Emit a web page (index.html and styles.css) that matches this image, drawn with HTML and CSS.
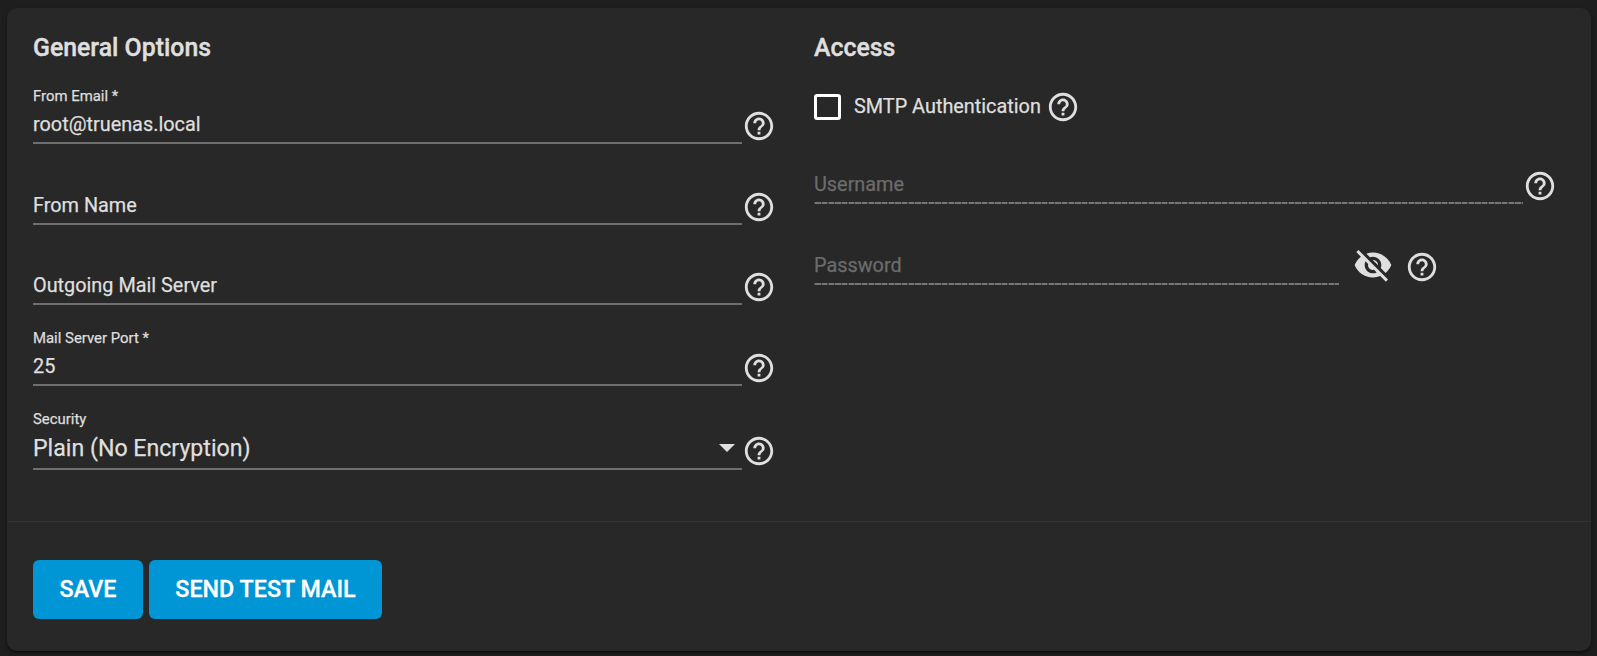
FILE: index.html
```html
<!DOCTYPE html>
<html lang="en">
<head>
<meta charset="utf-8">
<title>Email</title>
<link rel="stylesheet" href="styles.css">
</head>
<body>
<svg class="sprite" aria-hidden="true">
  <symbol id="help" viewBox="0 0 24 24"><path d="M11 18h2v-2h-2v2zm1-16C6.48 2 2 6.48 2 12s4.48 10 10 10 10-4.480 10-10S17.520 2 12 2zm0 18c-4.410 0-8-3.590-8-8s3.590-8 8-8 8 3.590 8 8-3.590 8-8 8zm0-14c-2.210 0-4 1.790-4 4h2c0-1.100.9-2 2-2s2 .9 2 2c0 2-3 1.750-3 5h2c0-2.250 3-2.500 3-5 0-2.210-1.790-4-4-4z"/></symbol>
  <symbol id="eye-off" viewBox="0 0 24 24"><path d="M12 7c2.760 0 5 2.240 5 5 0 .65-.13 1.260-.36 1.830l2.920 2.920c1.510-1.260 2.700-2.890 3.430-4.750-1.730-4.390-6-7.500-11-7.500-1.400 0-2.740.25-3.980.7l2.160 2.160C10.740 7.130 11.350 7 12 7zM2 4.270l2.280 2.280.46.46C3.080 8.300 1.780 10.020 1 12c1.730 4.390 6 7.500 11 7.500 1.550 0 3.030-.3 4.380-.84l.42.42L19.730 22 21 20.730 3.270 3 2 4.270zM7.530 9.800l1.550 1.550c-.05.21-.08.43-.08.65 0 1.660 1.340 3 3 3 .22 0 .44-.03.65-.08l1.550 1.550c-.67.33-1.410.53-2.200.53-2.760 0-5-2.240-5-5 0-.79.2-1.530.53-2.200zm4.310-.78l3.150 3.150.02-.16c0-1.660-1.340-3-3-3l-.17.01z"/></symbol>
</svg>
<main class="card">
  <div class="columns">
    <section class="column">
      <h3 class="title">General Options</h3>
      <div class="row">
        <div class="field"><span class="label">From Email *</span><span class="value">root@truenas.local</span></div>
        <svg class="help"><use href="#help"/></svg>
      </div>
      <div class="row">
        <div class="field"><span class="value">From Name</span></div>
        <svg class="help"><use href="#help"/></svg>
      </div>
      <div class="row short">
        <div class="field"><span class="value">Outgoing Mail Server</span></div>
        <svg class="help"><use href="#help"/></svg>
      </div>
      <div class="row">
        <div class="field"><span class="label">Mail Server Port *</span><span class="value">25</span></div>
        <svg class="help"><use href="#help"/></svg>
      </div>
      <div class="row tall">
        <div class="field"><span class="label">Security</span><span class="value select">Plain (No Encryption)<i class="arrow"></i></span></div>
        <svg class="help"><use href="#help"/></svg>
      </div>
    </section>
    <section class="column">
      <h3 class="title">Access</h3>
      <div class="check-row">
        <span class="checkbox"></span><span class="check-label">SMTP Authentication</span>
        <svg class="help"><use href="#help"/></svg>
      </div>
      <div class="row">
        <div class="field disabled"><span class="value">Username</span></div>
        <svg class="help"><use href="#help"/></svg>
      </div>
      <div class="row">
        <div class="field disabled password"><span class="value">Password</span></div>
        <svg class="eye"><use href="#eye-off"/></svg>
        <svg class="help"><use href="#help"/></svg>
      </div>
    </section>
  </div>
  <footer class="actions">
    <button class="btn save">SAVE</button>
    <button class="btn test">SEND TEST MAIL</button>
  </footer>
</main>
</body>
</html>
```
FILE: styles.css
```css
* { box-sizing: border-box; }
body {
  margin: 0;
  height: 656px;
  padding: 8px 6px 5px 7px;
  background: #1e1e1e;
  color: #dfdfdf;
  font-family: Roboto, sans-serif;
  -webkit-text-stroke: .25px;
  overflow: hidden;
}
.sprite { position: absolute; width: 0; height: 0; }
.card {
  height: 643px;
  border-radius: 10px;
  background: #282828;
  box-shadow: 0 3px 2px -2px rgba(0,0,0,.3), 0 2px 2px rgba(0,0,0,.2), 0 2px 5px rgba(0,0,0,.2);
}
.columns {
  display: grid;
  grid-template-columns: 743px 743px;
  column-gap: 38px;
  height: 513px;
  padding: 0 26px;
}
.title {
  height: 55px;
  margin: 0;
  padding-top: 24px;
  font-size: 24.850px;
  font-weight: 500;
  line-height: 31px;
  -webkit-text-stroke: .4px;
}
.row { display: flex; align-items: flex-end; height: 81px; }
.row.short { height: 80px; }
.row.tall { height: 84px; }
.field {
  display: flex;
  flex: none;
  flex-direction: column;
  width: 709px;
  border-bottom: 2px solid #6f6f6f;
}
.label { font-size: 14.900px; line-height: 18px; margin-bottom: 7px; }
.value { height: 30px; font-size: 19.850px; line-height: 26px; }
.select {
  display: flex;
  justify-content: space-between;
  height: 33px;
  font-size: 23.150px;
  line-height: 28px;
}
.arrow {
  margin: 9px 7px 0 0;
  width: 16px;
  height: 8px;
  background: #dfdfdf;
  clip-path: polygon(0 0, 100% 0, 50% 100%);
}
.help { flex: none; width: 34px; height: 34px; fill: #dfdfdf; }
.row .help { margin-bottom: 1.500px; }
.short .help { margin-bottom: .7px; }
.tall .help { margin-bottom: 2.500px; }
.disabled {
  color: #6c6c6c;
  border-bottom: 0;
  padding-bottom: 2px;
  background: repeating-linear-gradient(to right, #484848 0 1.330px, #757575 1.330px 6.667px) bottom / 100% 2px no-repeat;
}
.password { width: 525px; }
.eye { width: 40px; height: 40px; margin: 0 12px 0 14px; fill: #dfdfdf; }
.check-row { display: flex; align-items: flex-start; height: 60px; padding-top: 26.500px; }
.checkbox { width: 27px; height: 26px; margin: 4.500px 13px 0 0; border: 3px solid #fff; border-radius: 3px; }
.check-label { font-size: 19.850px; line-height: 26px; margin: 4.500px 5px 0 0; }
.check-row .help { margin: 0; }
.actions { display: flex; gap: 6px; height: 130px; border-top: 1px solid #333; padding: 38px 26px 0; }
.btn {
  height: 59px;
  padding: 0;
  border: 0;
  border-radius: 6px;
  background: #0095d5;
  color: #fff;
  font: 500 23.300px/57px Roboto, sans-serif;
  -webkit-text-stroke: .3px;
}
.save { width: 110px; }
.test { width: 233px; }
```
